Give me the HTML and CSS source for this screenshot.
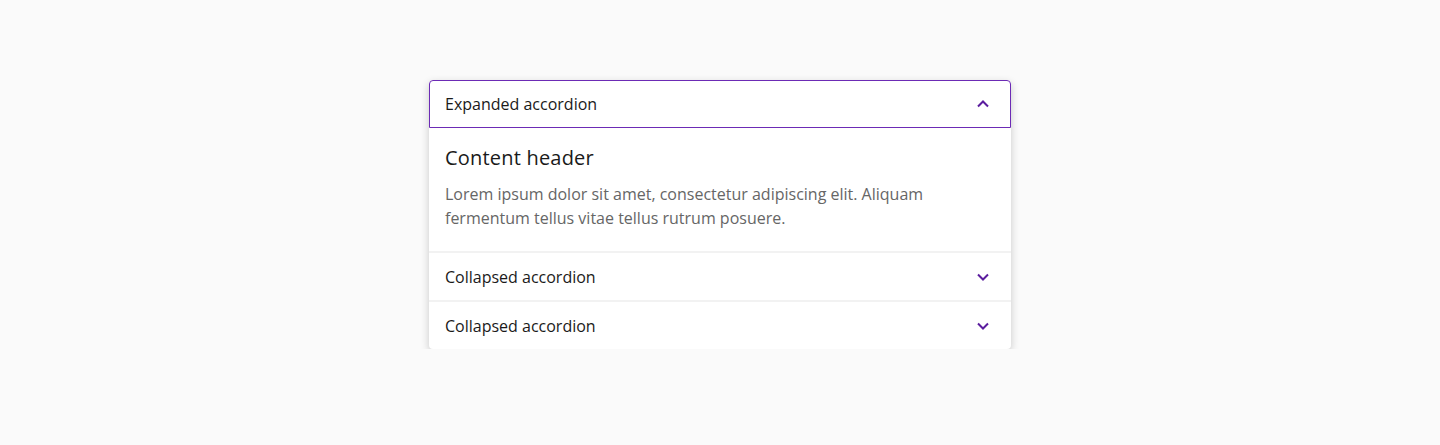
FILE: index.html
```html
<!DOCTYPE html>
<html lang="en">
<head>
<meta charset="utf-8">
<link rel="stylesheet" href="styles.css">
</head>
<body>
<div class="page">
  <div class="accordion">
    <div class="item expanded">
      <div class="head active">
        <span class="title">Expanded accordion</span>
        <svg class="chev" width="24" height="24" viewBox="0 0 24 24"><path d="M7 14.5l5-5 5 5" fill="none" stroke="currentColor" stroke-width="2"/></svg>
      </div>
      <div class="body">
        <h2 class="content-header">Content header</h2>
        <p class="text">Lorem ipsum dolor sit amet, consectetur adipiscing elit. Aliquam fermentum tellus vitae tellus rutrum posuere.</p>
      </div>
    </div>
    <div class="item">
      <div class="head">
        <span class="title">Collapsed accordion</span>
        <svg class="chev" width="24" height="24" viewBox="0 0 24 24"><path d="M7 9.5l5 5 5-5" fill="none" stroke="currentColor" stroke-width="2"/></svg>
      </div>
    </div>
    <div class="item">
      <div class="head">
        <span class="title">Collapsed accordion</span>
        <svg class="chev" width="24" height="24" viewBox="0 0 24 24"><path d="M7 9.5l5 5 5-5" fill="none" stroke="currentColor" stroke-width="2"/></svg>
      </div>
    </div>
  </div>
</div>
</body>
</html>
```

FILE: styles.css
```css
html, body {
  margin: 0;
  padding: 0;
  background: #fafafa;
  font-family: "Open Sans", "Noto Sans", sans-serif;
}
.page {
  display: flex;
  justify-content: center;
  padding-top: 80px;
}
.accordion {
  width: 582px;
  background: #fff;
  border-radius: 4px;
  box-shadow: 0 3px 8px rgba(0, 0, 0, 0.2);
}
.item + .item {
  border-top: 2px solid #f2f2f2;
}
.head {
  height: 47px;
  display: flex;
  align-items: center;
  justify-content: space-between;
  padding: 0 16px;
  color: #1a1a1a;
}
.head.active {
  height: 46px;
  padding: 0 15px;
  border: 1px solid #6c2bb5;
  border-radius: 4px 4px 0 0;
}
.title {
  font-size: 16px;
  line-height: 24px;
}
.chev {
  color: #5b1d9e;
  display: block;
}
.body {
  padding: 16px 16px 21px;
}
.content-header {
  margin: 0;
  font-size: 20px;
  font-weight: 400;
  line-height: 28px;
  letter-spacing: 0.2px;
  color: #1a1a1a;
}
.text {
  margin: 10px 0 0;
  font-size: 16px;
  line-height: 24px;
  color: #666;
}
```
